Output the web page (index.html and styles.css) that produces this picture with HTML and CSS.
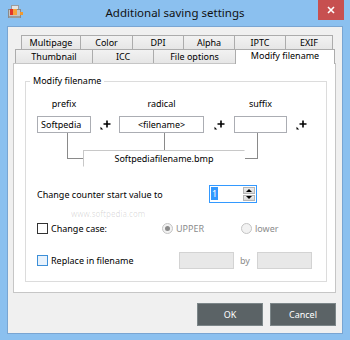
FILE: index.html
```html
<!DOCTYPE html>
<html lang="en">
<head>
<meta charset="UTF-8" />
<title>Additional saving settings</title>
<link rel="stylesheet" href="styles.css">
</head>
<body>
<div class="window">
  <div class="titlebar">
    <svg class="app-icon" width="15" height="14" viewBox="0 0 15 14">
      <rect x="3.5" y="0.5" width="7" height="4" fill="#e4e4e4" stroke="#9c9c9c"/>
      <rect x="0.5" y="4.5" width="12" height="8" fill="#c4c4c4" stroke="#8a8a8a"/>
      <rect x="2" y="4" width="4" height="6" fill="#e2352a"/>
      <rect x="5" y="4" width="4" height="6" fill="#f7a23a"/>
      <rect x="12" y="7" width="3" height="3" fill="#f29a2e"/>
      <rect x="1" y="11" width="11" height="2" fill="#9b9b9b"/>
    </svg>
    <div class="title">Additional saving settings</div>
    <button class="close" aria-label="Close">
      <svg width="8" height="8" viewBox="0 0 8 8"><path d="M1 1L7 7M7 1L1 7" stroke="#fff" stroke-width="1.6"/></svg>
    </button>
  </div>

  <div class="client">
    <div class="tab-row back">
      <div class="tab">Multipage</div>
      <div class="tab">Color</div>
      <div class="tab">DPI</div>
      <div class="tab">Alpha</div>
      <div class="tab">IPTC</div>
      <div class="tab">EXIF</div>
    </div>
    <div class="tab-row front">
      <div class="tab">Thumbnail</div>
      <div class="tab">ICC</div>
      <div class="tab">File options</div>
      <div class="tab active">Modify filename</div>
    </div>

    <div class="panel">
      <fieldset class="group">
        <legend>Modify filename</legend>
        <div class="watermark-url">www.softpedia.com</div>
        <div class="group-body">
          <div class="builder">
            <div class="part-label">prefix</div>
            <div></div>
            <div class="part-label">radical</div>
            <div></div>
            <div class="part-label">suffix</div>
            <div></div>

            <div class="field">Softpedia</div>
            <svg class="plus" width="11" height="11" viewBox="0 0 11 11"><path d="M7 1.5V8.5M3.5 5H10.5" stroke="#000" stroke-width="1.6"/><path d="M0.5 10.5V7.8L3.2 10.5Z" fill="#000"/></svg>
            <div class="field center">&lt;filename&gt;</div>
            <svg class="plus" width="11" height="11" viewBox="0 0 11 11"><path d="M7 1.5V8.5M3.5 5H10.5" stroke="#000" stroke-width="1.6"/><path d="M0.5 10.5V7.8L3.2 10.5Z" fill="#000"/></svg>
            <div class="field"></div>
            <svg class="plus" width="11" height="11" viewBox="0 0 11 11"><path d="M7 1.5V8.5M3.5 5H10.5" stroke="#000" stroke-width="1.6"/><path d="M0.5 10.5V7.8L3.2 10.5Z" fill="#000"/></svg>

            <div class="links">
              <div class="link-left"></div>
              <div class="result-col">
                <div class="link-mid"></div>
                <div class="result">Softpediafilename.bmp</div>
              </div>
              <div class="link-right"></div>
            </div>
          </div>

          <div class="row counter">
            <span class="counter-label">Change counter start value to</span>
            <div class="spin">
              <div class="spin-value"><span class="selected">1</span></div>
              <div class="spin-buttons">
                <div class="spin-btn"><i class="arrow-up"></i></div>
                <div class="spin-btn"><i class="arrow-down"></i></div>
              </div>
            </div>
          </div>

          <div class="row case-row">
            <label class="check-label wide-case"><span class="check"></span>Change case:</label>
            <label class="radio-label upper"><span class="radio checked"></span>UPPER</label>
            <label class="radio-label"><span class="radio"></span>lower</label>
          </div>

          <div class="row replace-row">
            <label class="check-label wide-replace"><span class="check hover"></span>Replace in filename</label>
            <div class="field disabled"></div>
            <span class="by">by</span>
            <div class="field disabled"></div>
          </div>
        </div>
      </fieldset>
    </div>

    <div class="actions">
      <button class="btn">OK</button>
      <button class="btn">Cancel</button>
    </div>
  </div>
</div>
</body>
</html>
```
FILE: styles.css
```css
html, body {
  margin: 0; padding: 0;
  width: 350px; height: 340px;
  overflow: hidden;
  font-family: "Noto Sans", "Open Sans", sans-serif;
  font-size: 9px;
  color: #000;
}
.window {
  width: 350px;
  height: 340px;
  background: #8bc0ef;
  display: flex;
  flex-direction: column;
}

/* title bar */
.titlebar {
  height: 26px;
  flex: none;
  display: grid;
  grid-template-columns: 1fr auto 1fr;
  align-items: start;
}
.app-icon {
  margin: 5px 0 0 8px;
}
.title {
  font-size: 11.5px;
  line-height: 16px;
  padding-top: 5px;
  color: #111;
}
.close {
  justify-self: end;
  width: 26px;
  height: 20px;
  margin-right: 6px;
  border: none;
  padding: 0;
  background: #c75050;
  display: flex;
  align-items: center;
  justify-content: center;
}

/* client area */
.client {
  flex: 1;
  margin: 0 7px 6px;
  border: 1px solid #79a5d2;
  background: #f0f0f0;
  padding: 8px 6px 0 5px;
  display: flex;
  flex-direction: column;
}
.tab-row {
  display: grid;
  height: 14px;
}
.tab-row.back {
  margin-left: 8px;
  grid-template-columns: 59px 52px 51px 51px 51px 48px;
}
.tab-row.front {
  margin-left: 2px;
  grid-template-columns: 77px 61px 82px 100px;
}
.tab {
  border: 1px solid #acacac;
  border-right: none;
  border-bottom: none;
  background: linear-gradient(#f2f2f2, #e6e6e6);
  text-align: center;
  line-height: 13px;
  white-space: nowrap;
}
.tab:last-child {
  border-right: 1px solid #acacac;
}
.tab.active {
  background: #fff;
  position: relative;
  z-index: 1;
  margin-bottom: -1px;
  line-height: 12px;
}
.panel {
  height: 230px;
  box-sizing: border-box;
  background: #fff;
  border: 1px solid #c6c6c6;
  padding: 11px 8px 10px 11px;
  display: flex;
  flex-direction: column;
}

/* group box */
.group {
  flex: 1;
  margin: 0;
  padding: 0;
  border: 1px solid #dcdcdc;
  position: relative;
  min-width: 0;
}
.group legend {
  margin-left: 4px;
  padding: 0 3px;
  line-height: 12px;
}
.group-body {
  padding: 11px 0 0 11px;
}
.watermark-url {
  position: absolute;
  left: 45px;
  top: 122px;
  font-size: 8px;
  line-height: 9px;
  color: rgba(0, 0, 0, 0.14);
}

/* filename builder */
.builder {
  display: grid;
  grid-template-columns: 54px 28px 85px 30px 53px 28px;
  row-gap: 6px;
  align-items: center;
}
.part-label {
  text-align: center;
  line-height: 12px;
}
.field {
  height: 17px;
  box-sizing: border-box;
  border: 1px solid #abadb3;
  background: #fff;
  line-height: 15px;
  padding: 0 3px;
  white-space: nowrap;
}
.field.center {
  text-align: center;
}
.field.disabled {
  width: 55px;
  background: #e8e8e8;
  border-color: #d3d3d3;
}
.plus {
  justify-self: center;
}
.links {
  grid-column: 1 / -1;
  display: flex;
  align-items: flex-start;
  margin-top: -6px;
}
.link-left {
  margin-left: 30px;
  width: 16px;
  height: 26px;
  box-sizing: border-box;
  border-left: 1px solid #8a8a8a;
  border-bottom: 1px solid #8a8a8a;
}
.link-right {
  width: 13px;
  height: 26px;
  box-sizing: border-box;
  border-right: 1px solid #8a8a8a;
  border-bottom: 1px solid #8a8a8a;
}
.result-col {
  width: 162px;
  display: flex;
  flex-direction: column;
  align-items: center;
}
.link-mid {
  width: 1px;
  height: 17px;
  background: #8a8a8a;
}
.result {
  align-self: stretch;
  height: 17px;
  box-sizing: border-box;
  border: 1px solid transparent;
  border-top-color: #c8c8c8;
  border-left-color: #c8c8c8;
  text-align: center;
  line-height: 15px;
}

/* option rows */
.row {
  display: flex;
  align-items: center;
  height: 18px;
}
.counter { margin-top: 18px; }
.case-row { margin-top: 16px; }
.replace-row { margin-top: 14px; }
.counter-label {
  width: 172px;
}
.spin {
  width: 48px;
  height: 18px;
  box-sizing: border-box;
  border: 1px solid #3399ff;
  display: flex;
  padding: 1px;
}
.spin-value {
  flex: 1;
  line-height: 14px;
}
.spin-value .selected {
  background: #3399ff;
  color: #fff;
  padding: 0 1px;
}
.spin-buttons {
  width: 12px;
  display: flex;
  flex-direction: column;
  gap: 1px;
}
.spin-btn {
  flex: 1;
  background: linear-gradient(#ececec, #d9d9d9);
  border: 1px solid #b5b5b5;
  display: flex;
  align-items: center;
  justify-content: center;
}
.arrow-up, .arrow-down {
  width: 0; height: 0;
  border-left: 3px solid transparent;
  border-right: 3px solid transparent;
}
.arrow-up { border-bottom: 3px solid #000; }
.arrow-down { border-top: 3px solid #000; }

.check-label, .radio-label {
  display: flex;
  align-items: center;
}
.wide-case { width: 125px; }
.wide-replace { width: 142px; }
.upper { width: 79px; }
.check {
  width: 11px;
  height: 11px;
  box-sizing: border-box;
  border: 1px solid #333;
  background: #fff;
  margin-right: 3px;
}
.check.hover {
  border-color: #3c8fd8;
  background: #e8f2fc;
}
.radio-label {
  color: #8c8c8c;
}
.radio {
  width: 11px;
  height: 11px;
  box-sizing: border-box;
  border-radius: 50%;
  border: 1px solid #c4c4c4;
  background: #f2f2f2;
  margin-right: 3px;
  display: flex;
  align-items: center;
  justify-content: center;
}
.radio.checked::after {
  content: "";
  width: 5px;
  height: 5px;
  border-radius: 50%;
  background: #8a8a8a;
}
.by {
  color: #8c8c8c;
  margin: 0 7px 0 6px;
}

/* dialog buttons */
.actions {
  display: flex;
  justify-content: flex-end;
  gap: 7px;
  margin-top: 10px;
}
.btn {
  width: 66px;
  height: 23px;
  border: 1px solid #7c8689;
  background: #5b6366;
  color: #fff;
  font-family: inherit;
  font-size: 9px;
  padding: 0;
}
```
